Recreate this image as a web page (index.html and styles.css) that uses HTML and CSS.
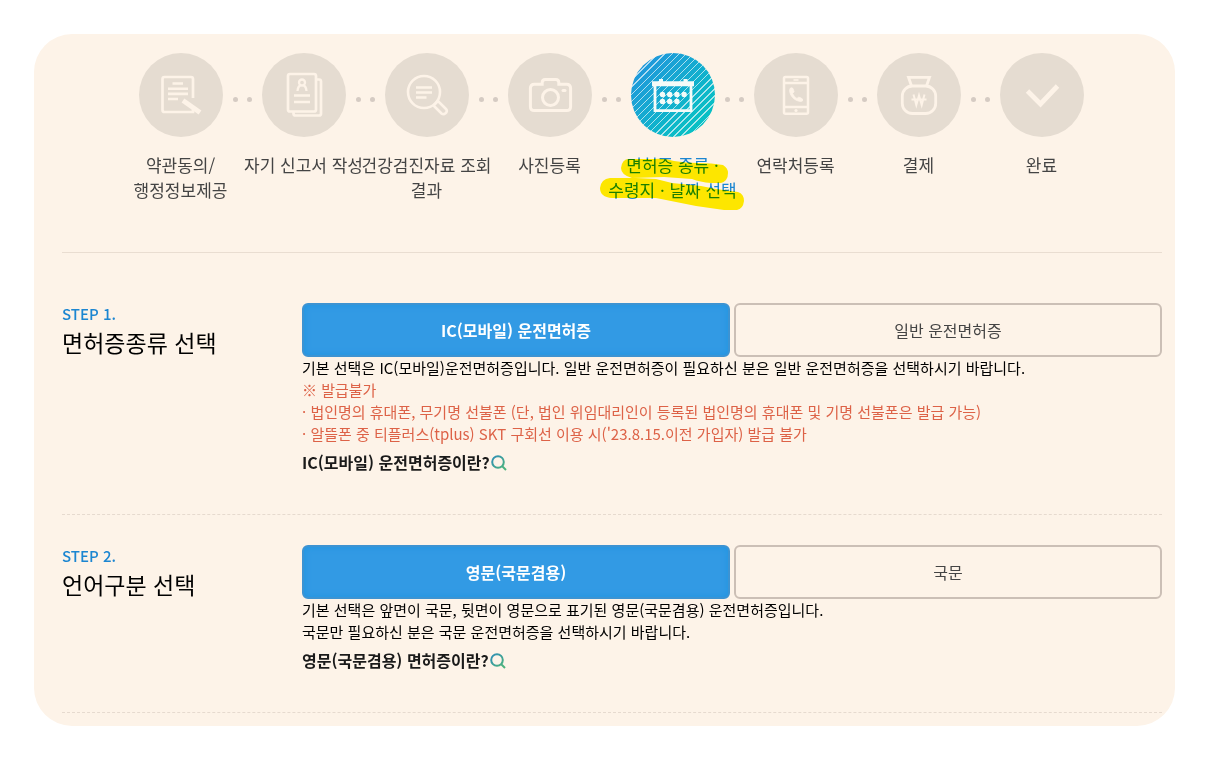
FILE: index.html
```html
<!DOCTYPE html>
<html lang="ko">
<head>
<meta charset="utf-8">
<meta name="viewport" content="width=device-width, initial-scale=1">
<title>면허증 종류 · 수령지 · 날짜 선택</title>
<link rel="stylesheet" href="styles.css">
</head>
<body>
<main class="card">
  <ol class="steps">
    <li class="step">
      <span class="step-icon">
        <svg viewBox="0 0 84 84" fill="none" stroke="currentColor" aria-hidden="true">
          <path d="M54 45V26Q54 24 52 24H25.500Q23.500 24 23.500 26V57Q23.500 59 25.500 59H54V56" stroke-width="2.700"/>
          <path d="M33.500 30.500H44M29 35.800H49M29 40.900H49M29 46H39" stroke-width="2.600"/>
          <path d="M44 47.500L61 59.500" stroke-width="4.800"/>
        </svg>
      </span>
      <span class="step-label">약관동의/<br>행정정보제공</span>
    </li>
    <li class="dots" aria-hidden="true"></li>
    <li class="step">
      <span class="step-icon">
        <svg viewBox="0 0 84 84" fill="none" stroke="currentColor" stroke-width="2.700" aria-hidden="true">
          <rect x="26" y="21" width="28" height="37.500" rx="2"/>
          <path d="M54 26.500H57Q59 26.500 59 28.500V60.500Q59 62.500 57 62.500H33.500Q31.500 62.500 31.500 60.500V58.500"/>
          <circle cx="40" cy="29.500" r="3" stroke-width="2.300"/>
          <path d="M35.500 38Q36 33 38.500 32.500M44.500 38Q44 33 41.500 32.500" stroke-width="2.300"/>
          <path d="M32 42.500H48M32 49H48"/>
        </svg>
      </span>
      <span class="step-label">자기 신고서 작성</span>
    </li>
    <li class="dots" aria-hidden="true"></li>
    <li class="step">
      <span class="step-icon">
        <svg viewBox="0 0 84 84" fill="none" stroke="currentColor" stroke-width="2.600" aria-hidden="true">
          <circle cx="39" cy="39" r="16"/>
          <path d="M31 34.500H47M31 39.500H47M31 44.500H41.500" stroke-width="2.600"/>
          <path d="M48.500 52.500L56.500 60.500Q58.500 62 60.500 60.300L61.300 59.500Q62.500 57.500 61 56L53 48Z"/>
        </svg>
      </span>
      <span class="step-label">건강검진자료 조회<br>결과</span>
    </li>
    <li class="dots" aria-hidden="true"></li>
    <li class="step">
      <span class="step-icon">
        <svg viewBox="0 0 84 84" fill="none" stroke="currentColor" stroke-width="3" aria-hidden="true">
          <path d="M26.500 31.200H34.200V29.500Q34.200 26.400 37.300 26.400H47.700Q50.800 26.400 50.800 29.500V31.200H58.500Q62.600 31.200 62.600 35.300V53.500Q62.600 57.600 58.500 57.600H26.500Q22.400 57.600 22.400 53.500V35.300Q22.400 31.200 26.500 31.200Z"/>
          <circle cx="42.500" cy="44.500" r="8"/>
          <path d="M55 37.500H57" stroke-linecap="round"/>
        </svg>
      </span>
      <span class="step-label">사진등록</span>
    </li>
    <li class="dots" aria-hidden="true"></li>
    <li class="step step-current" aria-current="step">
      <span class="step-icon">
        <svg viewBox="0 0 84 84" fill="none" stroke="currentColor" aria-hidden="true">
          <path d="M24 32V57.700H60V32" stroke-width="2.800"/>
          <path d="M21 30.700H63" stroke-width="5"/>
          <path d="M30 26V29M54.500 26V29" stroke-width="4"/>
          <path d="M31.500 41.500H54M31.500 48.500H47" stroke-width="5.400" stroke-linecap="round" stroke-dasharray="0.010 7.200"/>
        </svg>
      </span>
      <span class="step-label">면허증 종류 ·<br>수령지 · 날짜 선택
        <svg class="marker" viewBox="0 0 152 64" fill="currentColor" aria-hidden="true">
          <path d="M33 9H58Q68 8 78 11Q90 13 102 13Q116 13 127 15Q132 18 132 23Q132 31 125 33H115Q104 32 96 29L68 27L36 28Q25 25 25 18Q26 9 33 9Z"/>
          <path d="M14 28H40L60 29L76 33L105 36L120 39L142 42Q148 44 148 51Q147 59 141 60H128L100 56L80 52L60 48H16Q4 47 4 38Q5 29 14 28Z"/>
        </svg>
      </span>
    </li>
    <li class="dots" aria-hidden="true"></li>
    <li class="step">
      <span class="step-icon">
        <svg viewBox="0 0 84 84" fill="none" stroke="currentColor" stroke-width="2.500" aria-hidden="true">
          <rect x="30" y="24" width="24" height="36.800" rx="1.500"/>
          <path d="M30 30H54M30 54H54"/>
          <path d="M39.500 27H44.500" stroke-width="1.600"/>
          <circle cx="42" cy="57.500" r="1.600" fill="currentColor" stroke="none"/>
          <path d="M36 35.500Q37.500 34 39 35.500L40 38.500Q39.500 40 38.500 40.500Q40 44 43 45.500Q44.500 43.500 46 44.500L48.500 46Q49.500 48.500 46.500 48.500Q39.500 47.500 36.500 41.500Q34.800 38 36 35.500Z" fill="currentColor" stroke="currentColor" stroke-width="0.800"/>
        </svg>
      </span>
      <span class="step-label">연락처등록</span>
    </li>
    <li class="dots" aria-hidden="true"></li>
    <li class="step">
      <span class="step-icon">
        <svg viewBox="0 0 84 84" fill="none" stroke="currentColor" stroke-width="2.800" aria-hidden="true">
          <path d="M34.500 33L31.500 24.300H52.500L49.500 33"/>
          <rect x="25.300" y="33" width="33.400" height="27.500" rx="10"/>
          <path d="M36.500 41.500L39.300 52L42 42.500L44.700 52L47.500 41.500M34.500 46.500H49.500" stroke-width="2"/>
        </svg>
      </span>
      <span class="step-label">결제</span>
    </li>
    <li class="dots" aria-hidden="true"></li>
    <li class="step">
      <span class="step-icon">
        <svg viewBox="0 0 84 84" fill="none" stroke="currentColor" stroke-width="4.800" aria-hidden="true">
          <path d="M27.500 38L40.500 51L57.500 33"/>
        </svg>
      </span>
      <span class="step-label">완료</span>
    </li>
  </ol>

  <section class="choice choice-first">
    <header class="choice-head">
      <p class="choice-step">STEP 1.</p>
      <h2 class="choice-title">면허증종류 선택</h2>
    </header>
    <div class="choice-body">
      <div class="options">
        <button class="option option-on" type="button" aria-pressed="true">IC(모바일) 운전면허증</button>
        <button class="option" type="button" aria-pressed="false">일반 운전면허증</button>
      </div>
      <p class="note">기본 선택은 IC(모바일)운전면허증입니다. 일반 운전면허증이 필요하신 분은 일반 운전면허증을 선택하시기 바랍니다.</p>
      <p class="note note-warn">※ 발급불가<br>· 법인명의 휴대폰, 무기명 선불폰 (단, 법인 위임대리인이 등록된 법인명의 휴대폰 및 기명 선불폰은 발급 가능)<br>· 알뜰폰 중 티플러스(tplus) SKT 구회선 이용 시('23.8.15.이전 가입자) 발급 불가</p>
      <a class="more" href="#ic">IC(모바일) 운전면허증이란?
        <svg class="more-icon" viewBox="0 0 16 16" fill="none" aria-hidden="true">
          <defs><linearGradient id="lens" gradientUnits="userSpaceOnUse" x1="2" y1="2" x2="14" y2="14"><stop stop-color="#2f8fb5"/><stop offset="1" stop-color="#4db37c"/></linearGradient></defs>
          <g stroke="url(#lens)" stroke-width="2"><circle cx="7" cy="8" r="5.800"/><path d="M11 12L15 16"/></g>
        </svg>
      </a>
    </div>
  </section>

  <section class="choice">
    <header class="choice-head">
      <p class="choice-step">STEP 2.</p>
      <h2 class="choice-title">언어구분 선택</h2>
    </header>
    <div class="choice-body">
      <div class="options">
        <button class="option option-on" type="button" aria-pressed="true">영문(국문겸용)</button>
        <button class="option" type="button" aria-pressed="false">국문</button>
      </div>
      <p class="note">기본 선택은 앞면이 국문, 뒷면이 영문으로 표기된 영문(국문겸용) 운전면허증입니다.<br>국문만 필요하신 분은 국문 운전면허증을 선택하시기 바랍니다.</p>
      <a class="more" href="#english">영문(국문겸용) 면허증이란?
        <svg class="more-icon" viewBox="0 0 16 16" fill="none" aria-hidden="true">
          <g stroke="url(#lens)" stroke-width="2"><circle cx="7" cy="8" r="5.800"/><path d="M11 12L15 16"/></g>
        </svg>
      </a>
    </div>
  </section>
</main>
</body>
</html>
```
FILE: styles.css
```css
* {
  box-sizing: border-box;
}

body {
  margin: 0;
  padding: 34px;
  background: #fff;
  color: #000;
  font-family: "Noto Sans CJK KR", sans-serif;
  font-size: 15px;
  line-height: 22px;
}

p, h2, ol {
  margin: 0;
  padding: 0;
}

.card {
  padding: 19px 13px 13px 28px;
  border-radius: 38px;
  background: #fdf3e8;
}

/* progress */
.steps {
  display: flex;
  justify-content: center;
  padding-right: 2px;
  padding-bottom: 50px;
  border-bottom: 1px solid #e9ddd1;
  list-style: none;
}

.step {
  display: flex;
  flex-direction: column;
  align-items: center;
  gap: 15px;
  width: 84px;
}

.step-icon {
  width: 84px;
  height: 84px;
  border-radius: 50%;
  background: #e5dcd1;
  color: #fdf3e8;
}

.step-icon svg {
  display: block;
  width: 100%;
}

.step-label {
  position: relative;
  color: #444;
  font-size: 17px;
  line-height: 25px;
  text-align: center;
  white-space: nowrap;
}

.step-current .step-icon {
  background:
    repeating-linear-gradient(135deg, transparent 0 4px, rgba(255, 255, 255, 0.65) 4px 5px),
    linear-gradient(135deg, #2196dc 10%, #08bfc5 80%);
  color: #f4fbf8;
}

.step-current .step-label {
  color: #1c86d1;
}

.marker {
  position: absolute;
  top: -2px;
  left: 50%;
  width: 152px;
  height: 64px;
  margin-left: -77px;
  color: #fff200;
  mix-blend-mode: multiply;
}

.dots {
  display: flex;
  justify-content: center;
  gap: 9px;
  width: 39px;
  padding-top: 44px;
}

.dots::before,
.dots::after {
  content: "";
  width: 5px;
  height: 5px;
  border-radius: 50%;
  background: #d5cbc3;
}

/* choices */
.choice {
  display: grid;
  grid-template-columns: 240px 1fr;
  padding: 30px 0 41px;
  border-bottom: 1px dashed #e6dacf;
}

.choice-first {
  padding-top: 50px;
}

.choice-step {
  color: #1c86d1;
  font-weight: 500;
}

.choice-title {
  font-size: 23px;
  font-weight: 400;
  line-height: 34px;
}

.options {
  display: grid;
  grid-template-columns: 1fr 1fr;
  gap: 4px;
}

.option {
  height: 54px;
  border: 2px solid #cbbfb6;
  border-radius: 6px;
  background: transparent;
  color: #444;
  font: 400 16px "Noto Sans CJK KR", sans-serif;
}

.option-on {
  border-color: #3d93d2;
  background: #329ae4;
  box-shadow: inset 0 0 6px #1f94e0;
  color: #fff;
  font-weight: 700;
}

.note-warn {
  color: #dd6247;
}

.more {
  display: inline-flex;
  align-items: center;
  gap: 1px;
  margin-top: 6px;
  color: #1a1a1a;
  font-size: 16px;
  font-weight: 700;
  text-decoration: none;
  vertical-align: top;
}

.more-icon {
  width: 16px;
  height: 16px;
  overflow: visible;
}
```
